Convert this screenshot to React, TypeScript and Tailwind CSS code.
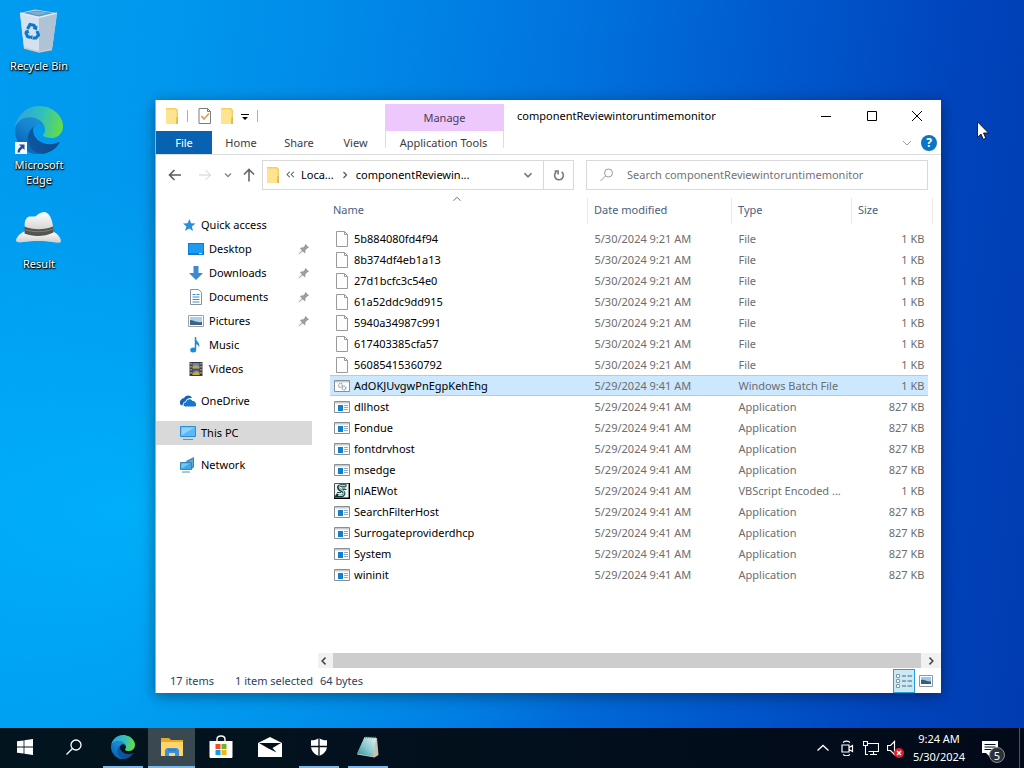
import type { ReactNode } from "react";

type FileKind = "file" | "batch" | "app" | "script";

interface FileRow {
  name: string;
  modified: string;
  type: string;
  size: string;
  kind: FileKind;
  selected?: boolean;
}

const plain = (name: string): FileRow => ({
  name,
  modified: "5/30/2024 9:21 AM",
  type: "File",
  size: "1 KB",
  kind: "file",
});

const app = (name: string): FileRow => ({
  name,
  modified: "5/29/2024 9:41 AM",
  type: "Application",
  size: "827 KB",
  kind: "app",
});

const files: FileRow[] = [
  plain("5b884080fd4f94"),
  plain("8b374df4eb1a13"),
  plain("27d1bcfc3c54e0"),
  plain("61a52ddc9dd915"),
  plain("5940a34987c991"),
  plain("617403385cfa57"),
  plain("56085415360792"),
  {
    name: "AdOKJUvgwPnEgpKehEhg",
    modified: "5/29/2024 9:41 AM",
    type: "Windows Batch File",
    size: "1 KB",
    kind: "batch",
    selected: true,
  },
  app("dllhost"),
  app("Fondue"),
  app("fontdrvhost"),
  app("msedge"),
  { name: "nlAEWot", modified: "5/29/2024 9:41 AM", type: "VBScript Encoded ...", size: "1 KB", kind: "script" },
  app("SearchFilterHost"),
  app("Surrogateproviderdhcp"),
  app("System"),
  app("wininit"),
];

/* ---------- icons ---------- */

function EdgeLogo({ className }: { className: string }) {
  return (
    <svg viewBox="0 0 256 256" className={className}>
      <defs>
        <linearGradient id="edge-dark" x1="60" y1="180" x2="240" y2="180" gradientUnits="userSpaceOnUse">
          <stop offset="0" stopColor="#0c59a4" />
          <stop offset="1" stopColor="#114a8b" />
        </linearGradient>
        <linearGradient id="edge-mid" x1="150" y1="90" x2="45" y2="225" gradientUnits="userSpaceOnUse">
          <stop offset="0" stopColor="#1b8fd6" />
          <stop offset="0.4" stopColor="#1585d2" />
          <stop offset="1" stopColor="#0a64b8" />
        </linearGradient>
        <linearGradient id="edge-top" x1="20" y1="70" x2="245" y2="120" gradientUnits="userSpaceOnUse">
          <stop offset="0" stopColor="#2ea6dc" />
          <stop offset="0.5" stopColor="#30c0bc" />
          <stop offset="1" stopColor="#63dc48" />
        </linearGradient>
      </defs>
      <g transform="translate(-4.6 -3)">
        <path
          fill="url(#edge-dark)"
          d="M235.68 195.46a93.73 93.73 0 0 1-10.54 4.71 101.87 101.87 0 0 1-35.9 6.46c-47.32 0-88.54-32.55-88.54-74.32A31.48 31.48 0 0 1 117.13 105c-42.8 1.8-53.8 46.4-53.8 72.53 0 73.88 68.09 81.37 82.76 81.37 7.91 0 19.84-2.3 27-4.56l1.31-.44a128.34 128.34 0 0 0 66.6-52.8 4 4 0 0 0-5.32-5.64z"
        />
        <path
          fill="url(#edge-mid)"
          d="M110.34 246.34A79.2 79.2 0 0 1 87.6 225a80.72 80.72 0 0 1 29.53-120c3.12-1.47 8.45-4.13 15.54-4a32.35 32.35 0 0 1 25.69 13 31.88 31.88 0 0 1 6.36 18.66c0-.21 24.46-79.6-80-79.6-43.9 0-80 41.66-80 78.21a130.15 130.15 0 0 0 12.11 56 128 128 0 0 0 156.38 67.11 75.55 75.55 0 0 1-62.78-8z"
        />
      </g>
      <path
        fill="url(#edge-top)"
        d="M152.32 148.86c-.81 1.05-3.3 2.5-3.3 5.66 0 2.61 1.7 5.12 4.72 7.23 14.38 10 41.49 8.68 41.56 8.68a59.56 59.56 0 0 0 30.27-8.35 61.38 61.38 0 0 0 30.43-52.88c.26-22.41-8-37.31-11.34-43.91C223.46 23.84 177.72 0 128 0 58 0 1 56.2 0 126.2c.48-36.54 36.8-66.05 80-66.05 3.5 0 23.46.34 42 10.07 16.34 8.58 24.9 18.94 30.85 29.21 6.18 10.67 7.28 24.15 7.28 29.52s-2.74 13.33-7.8 19.91z"
      />
    </svg>
  );
}

function RecycleBinIcon() {
  return (
    <svg viewBox="0 0 48 48" className="size-12">
      <path d="M5 6 20 2.500l22 3.500-5 36.500L24 45 9 41z" fill="#c9dceb" />
      <path d="M5 6 24 10.500 24 45 9 41z" fill="#d3e2ee" />
      <path d="M24 10.500 42 6l-5 36.500L24 45z" fill="#b0c3d4" />
      <path d="M8 6 21 3.500 39 6 24 9.500z" fill="#5f97bd" />
      <path d="M13 6 21 4.500 33 6 24 8z" fill="#7fb0d0" />
      <path d="M5 6 24 10.500 42 6" fill="none" stroke="#e6f1f8" strokeWidth="1.200" />
      <path d="m9 41 15 4 13-2.500" fill="none" stroke="#d8c5bd" strokeWidth="1.500" />
      <g fill="none" stroke="#0b78c8" strokeWidth="3">
        <path d="m12.500 22 2.500-4.500 4 .8 1.500 3.200" />
        <path d="m22 24 1.500 4-2.500 3h-3" />
        <path d="m15.500 30.500-3-1-1.500-3.500 1.200-2" />
      </g>
      <path d="m22.500 18.500-.5 5-4.500-2z M17.500 28v5l-3.500-3z M9.500 24.500l3.500-2 1.500 4z" fill="#0b78c8" />
    </svg>
  );
}

function HatIcon() {
  return (
    <svg viewBox="0 0 48 48" className="size-12">
      <defs>
        <linearGradient id="hat-felt" x1="0" y1="0" x2="0" y2="1">
          <stop offset="0" stopColor="#ffffff" />
          <stop offset="1" stopColor="#cfcdcb" />
        </linearGradient>
      </defs>
      <path d="M10 26c-5 2-9 7-9 9.500 1 2.500 4 2 8 1.500 9-1.500 20-1.500 28 0 5 1 9 1.500 9-1-.5-4-4-7.500-8-9.500z" fill="url(#hat-felt)" />
      <path d="M10 24c-1-6 0-10 3-12 3-1.500 5 .5 8-1 3-2 6-5 10-3.500 4 1.500 6.500 8 7 14.500l-1 6H10z" fill="url(#hat-felt)" />
      <path d="M9.500 21.500c8 3.500 20 3.500 28.500 0l.5 6c-9 4.500-21 4.500-29 1z" fill="#55524f" />
      <path d="M9.500 24.500c9 3 20 3 28.500-.5" fill="none" stroke="#837f7b" strokeWidth="1" />
    </svg>
  );
}

function FolderIcon() {
  return (
    <svg viewBox="0 0 14 18" className="h-[18px] w-[14px] shrink-0">
      <path d="M1 1h10l2 2v14H1z" fill="#f3cf65" />
      <path d="M1 2.500h9l1.500 1.500v13H1z" fill="#ffe48f" />
      <path d="M11.500 10H13v7h-2z" fill="#e5b84a" />
    </svg>
  );
}

function CheckDocIcon() {
  return (
    <svg viewBox="0 0 14 18" className="h-[18px] w-[14px] shrink-0">
      <path d="M1 1.500h8.500l3 3v12H1z" fill="#fff" stroke="#7d7d7d" />
      <path d="M9.500 1.500v3h3" fill="none" stroke="#7d7d7d" />
      <path d="m3.500 9 2.500 3 5-5.500" fill="none" stroke="#d8a05b" strokeWidth="1.800" />
    </svg>
  );
}

function FileIcon({ kind }: { kind: FileKind }) {
  if (kind === "file") {
    return (
      <svg viewBox="0 0 16 16" className="size-4 shrink-0">
        <path d="M2.500.5h8l3 3v12h-11z" fill="#fdfdfd" stroke="#9a9a9a" />
        <path d="M10.500.5v3h3" fill="none" stroke="#9a9a9a" />
      </svg>
    );
  }
  if (kind === "script") {
    return (
      <svg viewBox="0 0 16 16" className="size-4 shrink-0">
        <path d="M.5.5h15v15H.5z" fill="#eef6f4" stroke="#555" />
        <path d="M15.300 0v15.300H0" fill="none" stroke="#000" strokeWidth="1.400" />
        <path
          d="M12.500 2.500H6.500C3.500 3 4 5.500 6 7l3 1.500c2 1.500 1 4-1 4.500H2.500l1.500-2"
          fill="none"
          stroke="#12343a"
          strokeWidth="2.600"
        />
        <path d="M11.500 2.500h-5C4.500 3 5 5.500 6.500 6.500L9 8c1.500 1.500 1 4-1 4.500H4" fill="none" stroke="#8fe0cd" strokeWidth="1.200" />
        <path d="M7.500 5h4M8.500 6.500h4M3 9.500h4" stroke="#12343a" strokeWidth=".9" />
      </svg>
    );
  }
  return (
    <svg viewBox="0 0 16 16" className="size-4 shrink-0">
      <path d="M.5 2.500h15v11H.5z" fill="#fff" stroke="#8a8f94" />
      <path d="M1 3h14v1.500H1z" fill="#c6cbd0" />
      {kind === "app" ? (
        <>
          <path d="M4 6h5v6H4z" fill="#0f7fcf" />
          <path d="M10 6.500h4M10 8.500h4M10 10.500h4" stroke="#8faabd" />
        </>
      ) : (
        <g fill="none" stroke="#9aa6b0">
          <circle cx="6.500" cy="7.500" r="2" strokeWidth="1.500" strokeDasharray="1.200 .6" />
          <circle cx="10" cy="10" r="1.800" strokeWidth="1.500" strokeDasharray="1.200 .6" />
        </g>
      )}
    </svg>
  );
}

const navIcons: Record<string, ReactNode> = {
  "Quick access": (
    <path d="m9.500 2 1.500 4.200 4.500.3-3.600 3 1.100 4.500-3.800-2.500-4.200 2.500 1.400-4.500L3 6.500l4.500-.3z" fill="#2a8fdb" />
  ),
  Desktop: (
    <>
      <path d="M0 2h16v12H0z" fill="#0d7cd3" />
      <path d="M1 3h14v9H1z" fill="#1e9bf0" />
      <path d="M11 12.500h3" stroke="#cfeaff" />
    </>
  ),
  Downloads: <path d="M5.500 1h5v7H15l-7 7-7-7h4.500z" fill="#3b8ad0" />,
  Documents: (
    <>
      <path d="M2.500.5h8l3 3v12h-11z" fill="#fff" stroke="#8b9299" />
      <path d="M4.500 5.500h3M4.500 8h7M4.500 10.500h7M4.500 13h7M8.500 5.500h3" stroke="#3a93c6" />
    </>
  ),
  Pictures: (
    <>
      <path d="M.5 2.500h15v11H.5z" fill="#fff" stroke="#9aa2a9" />
      <path d="M2 4h12v8H2z" fill="#a9d2ef" />
      <path d="M2 7c3 0 6 3 12 2v3H2z" fill="#3d6282" />
    </>
  ),
  Music: (
    <>
      <path d="M7 0c0 4 6 5 4 11 0-3-2-4-4-4z" fill="#1d8bd8" />
      <path d="M7.500 0v12.500" stroke="#1d8bd8" strokeWidth="1.500" />
      <ellipse cx="5.200" cy="13" rx="3" ry="2.500" fill="#1d8bd8" />
    </>
  ),
  Videos: (
    <>
      <path d="M1.500 1h13v14h-13z" fill="#3a3a3a" />
      <path d="M4.500 2h7v5.500h-7z" fill="#5f86b8" />
      <path d="M4.500 8.500h7V14h-7z" fill="#47699b" />
      <path d="M4.500 5.500 8 4l3.500 2v1.500h-7zM4.500 12l4-2 3 1.500V14h-7z" fill="#c7a341" />
      <path d="M3 2v12M13 2v12" stroke="#e6e6e6" strokeDasharray="1.500 1.500" />
    </>
  ),
  OneDrive: (
    <>
      <path d="M2.500 12.500A3 3 0 0 1 1 7c.5-1.500 2-2 3-1.800C5.500 2 10 1.500 12 5 8 4.500 6 6.500 5.500 8.500 3.500 9 2.500 10.500 2.500 12.500z" fill="#0f63bd" />
      <path d="M5.500 13.500c-3-.5-2.500-4 .5-4.200.5-3.500 5-4.300 6.500-1.300 2-.2 3 1 3 2 1.500 1 .8 3.500-1 3.500z" fill="#1475d2" />
    </>
  ),
  "This PC": (
    <>
      <path d="M.5 1.500h15v10H.5z" fill="#5bb8f5" stroke="#2d8fd3" />
      <path d="M1.500 2.500h13l-13 8z" fill="#8dd2fb" />
      <path d="M3 14.500h10" stroke="#7b8c99" />
      <path d="M1 13h14" stroke="#c3ced6" />
    </>
  ),
  Network: (
    <>
      <path d="M6 4 14 0v10l-3 3z" fill="#3f87b5" />
      <path d="M8 4.500 13 2v7l-1.500 1.500z" fill="#63a9d2" />
      <path d="M.5 5.500h11v7H.5z" fill="#3fa9e8" stroke="#2f88c0" />
      <path d="M1.500 6.500h8l-8 5z" fill="#7cc8f5" />
      <path d="M2 15h8" stroke="#4b96c4" />
    </>
  ),
};

function NavIcon({ name }: { name: string }) {
  return (
    <svg viewBox="0 0 16 16" className="size-4 shrink-0">
      {navIcons[name]}
    </svg>
  );
}

function PinIcon() {
  return (
    <svg viewBox="0 0 12 12" className="size-3 shrink-0">
      <path d="M7.500 1 11 4.500l-1 .8-.6-.1-2 2 .1 2-1 1L4.600 8.300 1 11.500.6 11l3.200-3.600L2 5.500l1-1 2 .1 2-2-.2-.7z" fill="#989ea3" />
    </svg>
  );
}

function Stroke({ d, className, width = 1 }: { d: string; className: string; width?: number }) {
  return (
    <svg viewBox="0 0 16 16" className={className} fill="none" stroke="currentColor" strokeWidth={width}>
      <path d={d} />
    </svg>
  );
}

/* ---------- desktop ---------- */

function DesktopShortcut({ label, children }: { label: string; children: ReactNode }) {
  return (
    <button className="flex h-[99px] w-[78px] flex-col items-center gap-[3px] leading-[15px] text-white [text-shadow:1px_1px_1px_#000,0_1px_2px_#000,0_0_2px_#0008]">
      <span className="relative block size-12 shrink-0">{children}</span>
      <span className="w-[64px]">{label}</span>
    </button>
  );
}

function DesktopIcons() {
  return (
    <div className="flex w-[78px] flex-col pt-[7px]">
      <DesktopShortcut label="Recycle&nbsp;Bin">
        <RecycleBinIcon />
      </DesktopShortcut>
      <DesktopShortcut label="Microsoft Edge">
        <EdgeLogo className="size-12" />
        <svg viewBox="0 0 12 12" className="absolute bottom-0 left-0 size-3">
          <path d="M0 0h12v12H0z" fill="#f4f7fb" />
          <path d="M4 2.500h5.500V8L7.800 6.300C6 7.500 5 8.500 4.800 10.500H2.500C2.500 7.500 4 5.800 6 4.500z" fill="#1b4ea0" />
        </svg>
      </DesktopShortcut>
      <DesktopShortcut label="Result">
        <HatIcon />
      </DesktopShortcut>
    </div>
  );
}

/* ---------- explorer window ---------- */

function TitleBar() {
  return (
    <header className="flex h-[31px] shrink-0 items-stretch">
      <div className="flex w-[229px] shrink-0 items-center pl-[9px] text-[#8a8a8a]">
        <FolderIcon />
        <span className="ml-2 h-3 w-px bg-[#b0b0b0]" />
        <button aria-label="Properties" className="ml-[10px]">
          <CheckDocIcon />
        </button>
        <button aria-label="New folder" className="ml-2">
          <FolderIcon />
        </button>
        <button aria-label="Customize Quick Access Toolbar" className="ml-[6px] text-black">
          <svg viewBox="0 0 10 10" className="size-[10px]">
            <path d="M1 3h8v1H1zM2 6h6L5 9z" fill="currentColor" />
          </svg>
        </button>
        <span className="ml-[7px] h-3 w-px bg-[#b0b0b0]" />
      </div>
      <div className="mt-1 flex w-[119px] shrink-0 items-center justify-center bg-[#ecc8fc] text-[#4d3a59]">Manage</div>
      <h1 className="min-w-0 flex-1 truncate pl-[13px] leading-[31px]">componentReviewintoruntimemonitor</h1>
      <button aria-label="Minimize" className="flex w-[46px] items-center justify-center">
        <Stroke d="M3 8.500h10" className="size-4" />
      </button>
      <button aria-label="Maximize" className="flex w-[45px] items-center justify-center">
        <Stroke d="M3.500 3.500h9v9h-9z" className="size-4" />
      </button>
      <button aria-label="Close" className="mr-px flex w-[46px] items-center justify-center">
        <Stroke d="m3 3 10 10M13 3 3 13" className="size-4" />
      </button>
    </header>
  );
}

function RibbonTabs() {
  return (
    <nav className="flex h-6 shrink-0 border-b border-[#dcdddf] text-[#3b3b3b]">
      <button className="w-14 bg-[#0763b1] text-white">File</button>
      <button className="w-[58px]">Home</button>
      <button className="w-[58px]">Share</button>
      <button className="w-[57px] pr-[2px]">View</button>
      <button className="mb-[6px] w-[119px] border-x border-[#dcdddf] pt-1 pr-[2px]">Application Tools</button>
      <div className="flex flex-1 items-center justify-end gap-[6px] pr-1">
        <button aria-label="Expand the ribbon" className="text-[#9a9a9a]">
          <Stroke d="m4 6 4 4 4-4" className="size-4" />
        </button>
        <button
          aria-label="Help"
          className="flex size-4 items-center justify-center rounded-full bg-[#0b74c6] text-[12px] leading-4 font-bold text-white"
        >
          ?
        </button>
      </div>
    </nav>
  );
}

function AddressRow() {
  return (
    <div className="flex h-[39px] shrink-0 items-center pr-[13px] pl-[11px]">
      <button aria-label="Back" className="text-[#5c5c5c]">
        <Stroke d="M14 8H2.500m5-5-5 5 5 5" width={1.6} className="size-4" />
      </button>
      <button aria-label="Forward" className="ml-[14px] text-[#d0d0d0]">
        <Stroke d="M2 8h11.500m-5-5 5 5-5 5" className="size-4" />
      </button>
      <button aria-label="Recent locations" className="ml-[9px] text-[#8a8a8a]">
        <Stroke d="m4 6 4 4 4-4" width={2} className="size-3" />
      </button>
      <button aria-label="Up" className="ml-[7px] text-[#666]">
        <Stroke d="M8 14.500V2.500m-5 5 5-5 5 5" width={1.6} className="size-4" />
      </button>
      <div className="ml-[5px] flex h-[30px] w-[312px] shrink-0 items-center border border-[#d9d9d9] pl-[3px]">
        <FolderIcon />
        <Stroke d="m7 4-4 4 4 4m6-8-4 4 4 4" width={1.5} className="ml-[5px] size-[11px] text-[#555]" />
        <button className="ml-[5px]">Loca...</button>
        <Stroke d="m6 4 4 4-4 4" width={1.6} className="ml-[5px] size-3 text-[#555]" />
        <button className="ml-[5px]">componentReviewin...</button>
        <button aria-label="Previous locations" className="mr-2 ml-auto text-[#777]">
          <Stroke d="m4 6 4 4 4-4" width={2} className="size-[14px]" />
        </button>
        <button aria-label="Refresh" className="flex h-full w-[30px] items-center justify-center border-l border-[#d9d9d9] text-[#777]">
          <Stroke d="M11 4.500a5 5 0 1 1-6 0M3 3.500h4v4" width={1.8} className="size-[14px]" />
        </button>
      </div>
      <label className="ml-3 flex h-[30px] min-w-0 flex-1 items-center border border-[#d9d9d9] pl-3">
        <Stroke d="M13.500 6a4 4 0 1 1-8 0 4 4 0 0 1 8 0ZM6.500 9l-5 5" className="size-4 shrink-0 text-[#999]" />
        <input
          aria-label="Search"
          placeholder="Search componentReviewintoruntimemonitor"
          className="ml-3 min-w-0 flex-1 bg-transparent outline-none placeholder:text-[#737373]"
        />
      </label>
    </div>
  );
}

function NavItem({ name, nested, pinned, active }: { name: string; nested?: boolean; pinned?: boolean; active?: boolean }) {
  return (
    <li>
      <a
        href="#"
        className={`flex h-6 items-center gap-[5px] pr-[2px] ${nested ? "pl-8" : "pl-6"} ${active ? "bg-[#d9d9d9]" : ""}`}
      >
        <NavIcon name={name} />
        <span className="flex-1">{name}</span>
        {pinned && <PinIcon />}
      </a>
    </li>
  );
}

function NavigationPane() {
  return (
    <aside className="w-[162px] shrink-0 pt-[19px]">
      <ul className="flex w-[156px] flex-col">
        <NavItem name="Quick access" />
        <NavItem name="Desktop" nested pinned />
        <NavItem name="Downloads" nested pinned />
        <NavItem name="Documents" nested pinned />
        <NavItem name="Pictures" nested pinned />
        <NavItem name="Music" nested />
        <NavItem name="Videos" nested />
      </ul>
      <ul className="mt-2 flex w-[156px] flex-col gap-2">
        <NavItem name="OneDrive" />
        <NavItem name="This PC" active />
        <NavItem name="Network" />
      </ul>
    </aside>
  );
}

function FileTable() {
  return (
    <table className="w-full table-fixed border-collapse text-left">
      <colgroup>
        <col />
        <col className="w-[144px]" />
        <col className="w-[120px]" />
        <col className="w-[77px]" />
        <col className="w-1" />
      </colgroup>
      <thead>
        <tr className="h-[26px] text-[#4c607a] [&>th]:border-r [&>th]:border-[#e9e9e9] [&>th]:pb-[2px] [&>th]:font-normal">
          <th className="relative pl-[3px]">
            Name
            <Stroke d="m4 10 4-4 4 4" className="absolute -top-[6px] left-[120px] size-[14px] text-[#555]" />
          </th>
          <th className="pl-[6px]">Date modified</th>
          <th className="pl-[6px]">Type</th>
          <th className="pl-[6px]" colSpan={2}>
            Size
          </th>
        </tr>
        <tr className="h-1" />
      </thead>
      <tbody>
        {files.map((file) => (
          <tr
            key={file.name}
            className={`h-[21px] text-[#6d6d6d] ${file.selected ? "[&>td:not(:last-child)]:bg-[#cce8ff] [&>td:not(:last-child)]:shadow-[inset_0_1px_#99d1ff,inset_0_-1px_#99d1ff]" : ""}`}
          >
            <td className="pl-1 text-black">
              <span className="flex items-center gap-1">
                <FileIcon kind={file.kind} />
                {file.name}
              </span>
            </td>
            <td className="truncate pl-[7px]">{file.modified}</td>
            <td className="truncate pl-[7px]">{file.type}</td>
            <td className="pr-1 text-right">{file.size}</td>
            <td />
          </tr>
        ))}
      </tbody>
    </table>
  );
}

function StatusBar() {
  return (
    <footer className="flex h-[25px] shrink-0 items-center pr-2 pl-[14px] text-[#2c3f63]">
      <span className="w-[65px]">17 items</span>
      <span className="w-[85px] whitespace-nowrap">1 item selected</span>
      <span>64 bytes</span>
      <button
        aria-label="Details view"
        className="ml-auto flex h-6 w-[22px] items-center justify-center border border-[#26a0da] bg-[#cbe8f6]"
      >
        <svg viewBox="0 0 16 16" className="size-4" fill="none">
          <path d="M.5 1.500h3v3h-3zM.5 6.500h3v3h-3zM.5 11.500h3v3h-3z" fill="#fff" stroke="#8199a6" />
          <path d="M6 3h4m1.500 0H16M6 8h4m1.500 0H16M6 13h4m1.500 0H16" stroke="#52626c" />
        </svg>
      </button>
      <button aria-label="Large icons view" className="ml-1">
        <svg viewBox="0 0 14 12" className="h-3 w-[14px]">
          <path d="M.5.5h13v11H.5z" fill="#fff" stroke="#8a98a3" />
          <path d="M2 2h10v7H2z" fill="#9cc9e8" />
          <path d="M2 5c4-1 6 2 10 1.500V9H2z" fill="#2f5f86" />
        </svg>
      </button>
    </footer>
  );
}

function ExplorerWindow() {
  return (
    <main className="absolute top-[100px] right-[83px] bottom-[35px] left-[155px] flex flex-col border-l border-[#5cc4f8] bg-white text-black shadow-[0_3px_14px_rgba(0,0,0,0.4)]">
      <TitleBar />
      <RibbonTabs />
      <AddressRow />
      <div className="flex min-h-0 flex-1">
        <NavigationPane />
        <section className="flex min-w-0 flex-1 flex-col">
          <div className="min-h-0 flex-1 overflow-hidden pt-1 pr-2 pl-3">
            <FileTable />
          </div>
          <div className="flex h-[15px] shrink-0 items-stretch bg-[#f1f1f1] text-[#444]">
            <button aria-label="Scroll left" className="flex w-[15px] items-center">
              <Stroke d="m10 3.500-4.500 4.500 4.500 4.500" width={2} className="size-3" />
            </button>
            <div className="flex-1 bg-[#cdcdcd]" />
            <button aria-label="Scroll right" className="flex w-5 items-center justify-center">
              <Stroke d="m6 3.500 4.500 4.500-4.500 4.500" width={2} className="size-3" />
            </button>
          </div>
        </section>
      </div>
      <StatusBar />
    </main>
  );
}

/* ---------- taskbar ---------- */

function TaskButton({ label, open, active, children }: { label: string; open?: boolean; active?: boolean; children: ReactNode }) {
  return (
    <button aria-label={label} className="flex h-10 w-[49px] flex-col items-center">
      <span className={`flex w-[47px] flex-1 items-center justify-center ${active ? "bg-[#39494f]" : ""}`}>{children}</span>
      <span className={`h-[2px] ${active ? "w-[47px]" : "w-10"} ${open ? "bg-[#76b9ed]" : ""}`} />
    </button>
  );
}

function Taskbar() {
  return (
    <footer className="flex h-10 shrink-0 items-stretch bg-[linear-gradient(90deg,#02151f,#020a1a)] text-white">
      <TaskButton label="Start">
        <svg viewBox="0 0 16 16" className="size-4" fill="currentColor">
          <path d="M0 2.300 6.600 1.400v6.200H0zM7.400 1.300 16 0v7.600H7.400zM0 8.400h6.600v6.200L0 13.700zM7.400 8.400H16V16l-8.600-1.300z" />
        </svg>
      </TaskButton>
      <TaskButton label="Search">
        <Stroke d="M15 6a5 5 0 1 1-10 0 5 5 0 0 1 10 0ZM6.500 9.500l-6 6" width={1.3} className="size-4" />
      </TaskButton>
      <TaskButton label="Microsoft Edge" open>
        <EdgeLogo className="size-6" />
      </TaskButton>
      <TaskButton label="File Explorer" open active>
        <svg viewBox="0 0 24 20" className="h-5 w-6">
          <path d="M1 1h8l2 2h12v16H1z" fill="#e9a825" />
          <path d="M1 5h22v14H1z" fill="#ffd56a" />
          <path d="M5 19v-6l2-2h10l2 2v6h-4v-3H9v3z" fill="#3c8fdc" />
          <path d="M8 13h8" stroke="#2670b8" />
        </svg>
      </TaskButton>
      <TaskButton label="Microsoft Store">
        <svg viewBox="0 0 24 24" className="size-6">
          <path d="M8 7V4.500C8 2.500 9.500 1 12 1s4 1.500 4 3.500V7" fill="none" stroke="#fff" strokeWidth="1.400" />
          <path d="M.5 6h23v15.500c0 1-.5 1.500-1.500 1.500H2c-1 0-1.500-.5-1.500-1.500z" fill="#fff" />
          <path d="M6.500 9h5v5h-5z" fill="#f04e1f" />
          <path d="M12.500 9h5v5h-5z" fill="#6fb51b" />
          <path d="M6.500 15h5v5h-5z" fill="#0b9fe4" />
          <path d="M12.500 15h5v5h-5z" fill="#f9b50e" />
        </svg>
      </TaskButton>
      <TaskButton label="Mail">
        <svg viewBox="0 0 24 20" className="h-5 w-6">
          <path d="M0 6 12 0l12 6v14H0z" fill="#fff" />
          <path d="M1 6h22l-8.500 5 4 4.500L9.500 11z" fill="#02101c" />
        </svg>
      </TaskButton>
      <TaskButton label="Windows Security" open>
        <svg viewBox="0 0 18 18" className="size-[18px]">
          <path d="M9 0c2 1.500 4.500 2.300 8 2.300V8c0 5-3.500 8.500-8 10-4.500-1.500-8-5-8-10V2.300C4.500 2.300 7 1.500 9 0z" fill="#fff" />
          <path d="M9 0v18M1 8.500h16" stroke="#02101c" strokeWidth="1.300" />
        </svg>
      </TaskButton>
      <TaskButton label="Notepad" open>
        <svg viewBox="0 0 24 24" className="size-6">
          <defs>
            <linearGradient id="notepad" x1="0" y1="1" x2="1" y2="0">
              <stop offset="0" stopColor="#2b8f9c" />
              <stop offset="0.5" stopColor="#8fcbd0" />
              <stop offset="1" stopColor="#e3f0ee" />
            </linearGradient>
          </defs>
          <path d="M9 2.500 21 3l1.500 17-4 2.500L1 19.500z" fill="#c9c1ae" />
          <path d="M8.500 2 20 3l-2.500 18.500L1 18.500z" fill="url(#notepad)" />
          <path d="M9 2.500h11" stroke="#5c7f86" strokeWidth="1.500" strokeDasharray="1 1" />
        </svg>
      </TaskButton>

      <div className="ml-auto flex items-center">
        <button aria-label="Show hidden icons">
          <Stroke d="m2.500 10.500 5.500-5 5.500 5" width={1.3} className="size-4" />
        </button>
        <button aria-label="Meet Now" className="ml-2">
          <Stroke
            d="M3 5h7v7H3zM10 7.500l3.500-2v6L10 9.500M4 2.500c2-1.500 5-1.500 7 0M4 14.500c2 1.500 5 1.500 7 0"
            width={1.2}
            className="size-4"
          />
        </button>
        <button aria-label="Network" className="ml-2">
          <Stroke d="M4.500 3.500h11v8H5.500M10.500 11.500v3M7 14.500h7M.5 1.500h4v4h-4zM2.500 5.500v9H5" width={1.1} className="size-4" />
        </button>
        <button aria-label="Volume muted" className="relative ml-2">
          <Stroke d="M.5 5.500h3l4-4v13l-4-4h-3z" width={1.2} className="size-4" />
          <svg viewBox="0 0 10 10" className="absolute -right-px -bottom-[2px] size-[10px]">
            <circle cx="5" cy="5" r="5" fill="#d9222c" />
            <path d="m3 3 4 4M7 3 3 7" stroke="#fff" strokeWidth="1.300" />
          </svg>
        </button>
        <button className="ml-[6px] w-[60px] text-center leading-[18px]">
          <span className="block">9:24 AM</span>
          <span className="block">5/30/2024</span>
        </button>
        <button aria-label="Notifications" className="relative ml-3 h-10 w-[38px]">
          <svg viewBox="0 0 18 18" className="mt-px size-[18px]">
            <path d="M1 1h16v12H9v4l-4-4H1z" fill="#fff" />
            <path d="M3.500 4.500h11M3.500 7h11M3.500 9.500h7" stroke="#02101c" />
          </svg>
          <span className="absolute top-[19px] left-2 flex size-4 items-center justify-center rounded-full border border-[#8a8e92] bg-[#2c3238] leading-none">
            5
          </span>
        </button>
        <span className="mr-1 h-10 w-px bg-[#4a5864]" />
      </div>
    </footer>
  );
}

export default function App() {
  return (
    <div className="flex h-screen min-h-[640px] flex-col font-['Noto_Sans','Open_Sans',sans-serif] text-[11px] leading-4">
      <div className="relative flex-1 bg-[radial-gradient(ellipse_at_12%_70%,#00b4fccc_0%,#00b4fc00_45%),linear-gradient(96deg,#009cf0_0%,#0098ee_15%,#008ae8_32%,#0074de_52%,#0058cc_72%,#0044bc_88%,#003cb0_100%)]">
        <DesktopIcons />
        <ExplorerWindow />
        <svg viewBox="0 0 12 19" className="absolute top-[121px] right-[35px] h-[19px] w-3">
          <path d="M.5.8v15.500L4 13l2.300 5.300 2.500-1L6.500 12h5z" fill="#fff" stroke="#000" strokeWidth=".8" />
        </svg>
      </div>
      <Taskbar />
    </div>
  );
}
